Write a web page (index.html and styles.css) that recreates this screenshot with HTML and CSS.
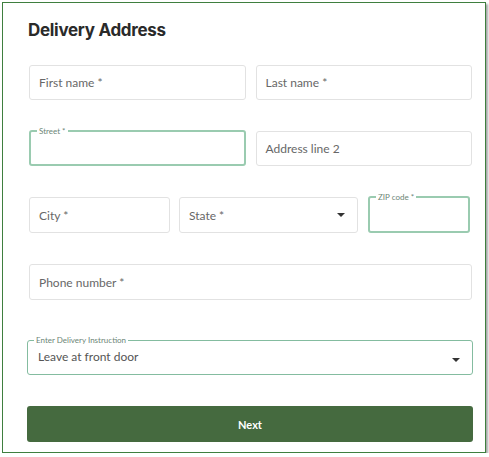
FILE: index.html
```html
<!DOCTYPE html>
<html>
<head>
<meta charset="utf-8">
<link rel="stylesheet" href="styles.css">
</head>
<body>
<div class="frame">
  <h1 class="title">Delivery Address</h1>
  <div class="row two">
    <div class="field"><span class="ph">First name *</span></div>
    <div class="field"><span class="ph">Last name *</span></div>
  </div>
  <div class="row two">
    <fieldset class="field notched focus"><legend>Street *</legend></fieldset>
    <div class="field"><span class="ph">Address line 2</span></div>
  </div>
  <div class="row three">
    <div class="field"><span class="ph">City *</span></div>
    <div class="field select"><span class="ph">State *</span><span class="caret"></span></div>
    <fieldset class="field notched focus"><legend>ZIP code *</legend></fieldset>
  </div>
  <div class="row one">
    <div class="field"><span class="ph">Phone number *</span></div>
  </div>
  <div class="row wide">
    <fieldset class="field notched thin select"><legend>Enter Delivery Instruction</legend><span class="val">Leave at front door</span><span class="caret"></span></fieldset>
  </div>
  <div class="row wide btnrow">
    <button class="next">Next</button>
  </div>
</div>
</body>
</html>
```
FILE: styles.css
```css
* { box-sizing: border-box; }
html, body { margin: 0; padding: 0; background: #fff; }
body { font-family: "Lato", "Open Sans", sans-serif; }
.frame {
  margin: 2px 0 0 2px;
  width: 484px;
  height: 451px;
  border: 1px solid #3f7f3f;
  box-shadow: 2px 2px 2px rgba(0,0,0,0.35);
  padding: 0 13px 0 26px;
}
.title {
  margin: 0 0 0 -1px;
  padding-top: 17px;
  height: 62px;
  font-family: "Inter", sans-serif;
  font-weight: 700;
  font-size: 17px;
  letter-spacing: -0.3px;
  color: #2a2a2a;
}
.row { display: grid; column-gap: 10px; margin-bottom: 31px; }
.row.two { grid-template-columns: 1fr 1fr; }
.row.three { grid-template-columns: 141px 179px 103px; column-gap: 9px; }
.row.three > :last-child { margin-left: 1px; }
.row.one { grid-template-columns: 1fr; margin-bottom: 40px; }
.row.wide { margin-left: -2px; margin-right: -1px; }
.field {
  height: 35px;
  border: 1px solid #e2e2e2;
  border-radius: 3px;
  display: flex;
  align-items: center;
  padding: 0 9px;
  margin: 0;
  min-width: 0;
  position: relative;
}
.row.three .field, .row.one .field { height: 36px; }
.ph { font-size: 12px; color: #676767; }
fieldset.field.notched {
  display: block;
  padding: 0 9px;
  margin: -4px 0 0 0;
  height: 39px;
}
fieldset.field.focus {
  border-style: solid;
  border-width: 2px;
  border-color: #9acbb0;
}
.row.three fieldset.notched { height: 40px; }
fieldset.notched legend {
  font-size: 8px;
  color: #6c8576;
  padding: 0 2px;
  margin-left: -3px;
  line-height: 8px;
}
fieldset.field.thin {
  border: 1px solid #84bca0;
  display: flex;
  flex-direction: column;
  align-items: flex-start;
}
.select .caret {
  position: absolute;
  right: 12px;
  top: 50%;
  margin-top: -2px;
  width: 0; height: 0;
  border-left: 4px solid transparent;
  border-right: 4px solid transparent;
  border-top: 4px solid #333;
}
fieldset.thin .caret { margin-top: -1px; }
.val {
  font-size: 12px;
  color: #555;
  display: block;
  padding-left: 1px;
  margin-top: 5px;
}
.btnrow { margin-bottom: 0; margin-left: -1px; }
.next {
  width: 100%;
  height: 36px;
  border: none;
  border-radius: 3px;
  background: #456a3f;
  color: #fff;
  font-family: "Lato", sans-serif;
  font-weight: 700;
  font-size: 11px;
}
```
